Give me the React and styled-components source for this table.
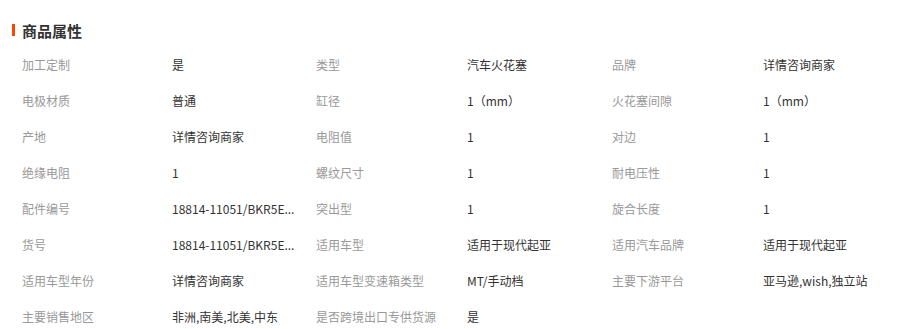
import React from 'react'
import styled, { createGlobalStyle } from 'styled-components'

const Global = createGlobalStyle`
  body {
    margin: 0;
    background: #fff;
    font-family: "Noto Sans CJK SC", "Microsoft YaHei", sans-serif;
  }
`

const Section = styled.section`
  width: 920px;
  padding: 13px 0 0 12px;
  box-sizing: border-box;
`

const Title = styled.h3`
  display: flex;
  align-items: center;
  gap: 7px;
  margin: 0;
  height: 34px;
  font-size: 15px;
  font-weight: bold;
  color: #333;

  &::before {
    content: '';
    display: block;
    width: 3px;
    height: 12px;
    background: #ff4400;
  }
`

const Grid = styled.div`
  display: grid;
  grid-template-columns: 150px 144px 151px 145px 151px 1fr;
  grid-auto-rows: 35.9px;
  padding-left: 10px;
  font-size: 12px;
`

const Cell = styled.div`
  display: flex;
  align-items: center;
  white-space: nowrap;
  overflow: hidden;
  color: ${p => (p.$label ? '#999' : '#333')};
`

const props = [
  ['加工定制', '是'], ['类型', '汽车火花塞'], ['品牌', '详情咨询商家'],
  ['电极材质', '普通'], ['缸径', '1（mm）'], ['火花塞间隙', '1（mm）'],
  ['产地', '详情咨询商家'], ['电阻值', '1'], ['对边', '1'],
  ['绝缘电阻', '1'], ['螺纹尺寸', '1'], ['耐电压性', '1'],
  ['配件编号', '18814-11051/BKR5E...'], ['突出型', '1'], ['旋合长度', '1'],
  ['货号', '18814-11051/BKR5E...'], ['适用车型', '适用于现代起亚'], ['适用汽车品牌', '适用于现代起亚'],
  ['适用车型年份', '详情咨询商家'], ['适用车型变速箱类型', 'MT/手动档'], ['主要下游平台', '亚马逊,wish,独立站'],
  ['主要销售地区', '非洲,南美,北美,中东'], ['是否跨境出口专供货源', '是'],
]

export default function App() {
  return (
    <>
      <Global />
      <Section>
        <Title>商品属性</Title>
        <Grid>
          {props.map(([k, v]) => (
            <React.Fragment key={k}>
              <Cell $label>{k}</Cell>
              <Cell>{v}</Cell>
            </React.Fragment>
          ))}
        </Grid>
      </Section>
    </>
  )
}
